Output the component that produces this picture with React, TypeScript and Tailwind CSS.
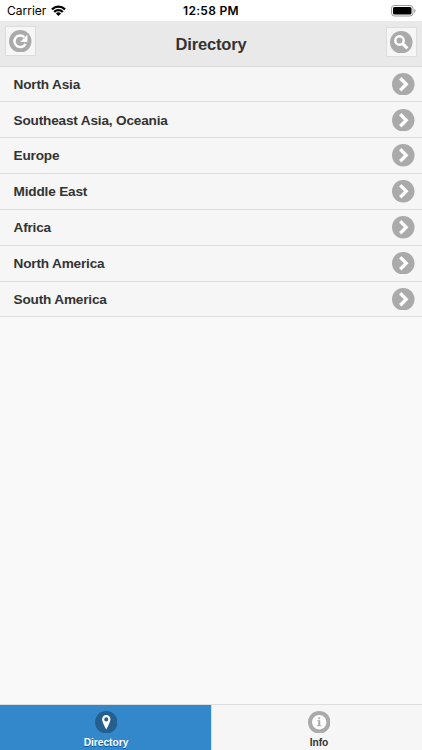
import type { ReactNode } from 'react'

const REGIONS = [
  'North Asia',
  'Southeast Asia, Oceania',
  'Europe',
  'Middle East',
  'Africa',
  'North America',
  'South America',
]

/** White 14px glyph centred on a round disc. */
function DiscIcon({ dark = false, children }: { dark?: boolean; children: ReactNode }) {
  return (
    <svg viewBox="-4 -4 22 22" className="size-[22.5px] shrink-0" aria-hidden="true">
      <circle cx="7" cy="7" r="11" fill={dark ? '#245f8f' : '#aaaaaa'} />
      {children}
    </svg>
  )
}

function CaratIcon() {
  return (
    <DiscIcon>
      <path fill="#fff" d="M2.9 2.3 5.2 0l7 7-7 7-2.3-2.3L7.6 7z" />
    </DiscIcon>
  )
}

function RefreshIcon() {
  return (
    <DiscIcon>
      <path d="M12.2 9.4A5.7 5.7 0 1 1 11 2.9" fill="none" stroke="#fff" strokeWidth="2.4" />
      <path fill="#fff" d="M14 .6v7.2H6.8z" />
    </DiscIcon>
  )
}

function SearchIcon() {
  return (
    <DiscIcon>
      <circle cx="5.3" cy="5.3" r="4.1" fill="none" stroke="#fff" strokeWidth="2.4" />
      <path d="m8.3 8.3 4.7 4.7" stroke="#fff" strokeWidth="2.9" />
    </DiscIcon>
  )
}

function LocationIcon() {
  return (
    <DiscIcon dark>
      <path
        fill="#fff"
        fillRule="evenodd"
        d="M7 0C4.7 0 2.9 1.9 2.9 4.2 2.9 6.5 7 14 7 14s4.1-7.5 4.1-9.8C11.1 1.9 9.3 0 7 0zm0 6.2a2 2 0 1 1 0-4 2 2 0 0 1 0 4z"
      />
    </DiscIcon>
  )
}

function InfoIcon() {
  return (
    <DiscIcon>
      <path
        fill="#fff"
        d="M7 0C3.1 0 0 3.1 0 7s3.1 7 7 7 7-3.1 7-7-3.1-7-7-7zm0 2c.6 0 1 .4 1 1s-.4 1-1 1-1-.4-1-1 .4-1 1-1zm2 9H5v-1h1V6H5V5h3v5h1z"
      />
    </DiscIcon>
  )
}

function StatusBar() {
  return (
    <div className="grid h-[21px] grid-cols-3 items-center bg-white pt-px font-[Inter,sans-serif] text-black">
      <div className="flex items-center gap-[5px] pl-[7px] text-[12px] font-normal">
        Carrier
        <svg viewBox="0 0 16 12" className="mb-px h-[11px] w-[15px]" aria-hidden="true">
          <g fill="none" stroke="#000" strokeWidth="2.5">
            <path d="M.9 4.7a10.2 10.2 0 0 1 14.2 0" />
            <path d="M3.3 7.6a6.6 6.6 0 0 1 9.4 0" />
          </g>
          <path d="M5.2 9.4a3.9 3.9 0 0 1 5.6 0L8 12z" />
        </svg>
      </div>
      <div className="text-center text-[12px] font-semibold tracking-[0.3px]">12:58 PM</div>
      <div className="flex justify-end pr-[6px]">
        <svg viewBox="0 0 25 12" className="mb-px h-[12px] w-[25px]" aria-hidden="true">
          <rect x=".5" y=".5" width="21.5" height="10.5" rx="3" fill="none" stroke="#999" />
          <rect x="2" y="2" width="18.5" height="7.5" rx="1.6" />
          <path d="M23.3 4v3.6c.8-.3 1.2-1 1.2-1.8s-.4-1.5-1.2-1.8z" fill="#888" />
        </svg>
      </div>
    </div>
  )
}

const headerButton = 'flex h-[30px] w-[31px] justify-center border border-[#dddddd] bg-[#f6f6f6] pt-[2.5px]'

export default function App() {
  return (
    <div className="flex h-[750px] w-[422px] flex-col overflow-hidden bg-[#f9f9f9] font-['Liberation_Sans',Arial,sans-serif] font-bold text-[#333333]">
      <StatusBar />
      <header className="flex h-[45.5px] items-start justify-between border-b border-[#dadada] bg-[#e9e9e9] px-[5px] pt-[5px]">
        <button className={headerButton} aria-label="Refresh">
          <RefreshIcon />
        </button>
        <h1 className="pt-[7px] text-[16.5px] leading-[22px] tracking-[-0.15px]">Directory</h1>
        <button className={`${headerButton} mt-px`} aria-label="Search">
          <SearchIcon />
        </button>
      </header>

      <ul className="flex-1">
        {REGIONS.map((region) => (
          <li
            key={region}
            className="flex h-[35.85px] items-center justify-between border-b border-[#dddddd] bg-[#f6f6f6] pr-[7.5px] pl-[13.5px] text-[13.6px] leading-[18px] tracking-[-0.17px]"
          >
            <span className="pt-[1.5px]">{region}</span>
            <CaratIcon />
          </li>
        ))}
      </ul>

      <nav className="flex h-[46px] border-t border-[#dddddd] text-[10.2px] leading-[12px]">
        <a className="flex w-[211px] flex-col items-center gap-[4px] bg-[#3388cc] pt-[5.5px] pl-px text-white [text-shadow:0_1px_0_#005599]">
          <LocationIcon />
          Directory
        </a>
        <a className="flex flex-1 flex-col items-center gap-[4px] border-l border-[#dddddd] bg-[#f6f6f6] pt-[5.5px] pl-[4px]">
          <InfoIcon />
          Info
        </a>
      </nav>
    </div>
  )
}
